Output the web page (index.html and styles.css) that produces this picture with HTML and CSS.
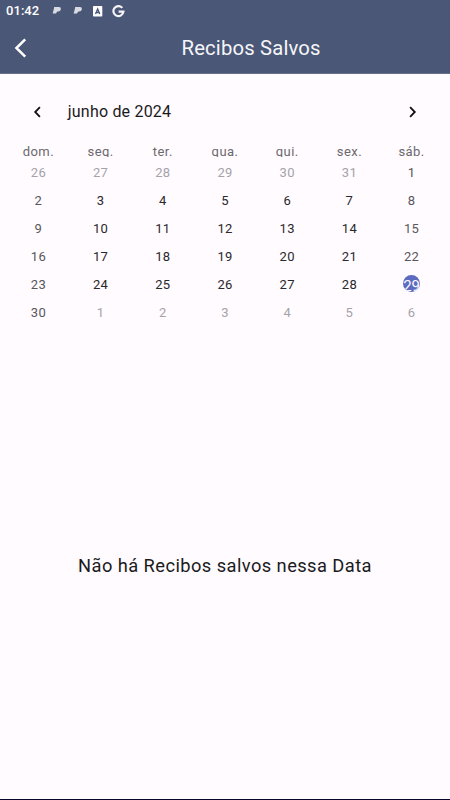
FILE: index.html
```html
<!DOCTYPE html>
<html lang="pt-BR">
<head>
<meta charset="utf-8">
<title>Recibos Salvos</title>
<link rel="stylesheet" href="styles.css">
</head>
<body>
<div class="app">
  <header class="top">
    <div class="status">
      <span class="clock">01:42</span>
      <svg class="pp" width="10" height="10" viewBox="0 0 10 10"><path d="M2.200 1h4.800q2.200 0 1.900 2.200q-.4 2.300-2.800 2.300H5.200L4 7.500H.6L1.600 4z" fill="#d9dbe3"/></svg>
      <svg class="pp" width="10" height="10" viewBox="0 0 10 10"><path d="M2.200 1h4.800q2.200 0 1.900 2.200q-.4 2.300-2.800 2.300H5.200L4 7.500H.6L1.600 4z" fill="#d9dbe3"/></svg>
      <svg class="abox" width="10" height="11" viewBox="0 0 10 11"><rect width="9.300" height="10.600" rx=".8" fill="#fff"/><path d="M2.500 8L4.650 2.900 6.800 8M3.300 6.500h2.700" stroke="#4b5777" stroke-width="1.300" fill="none"/></svg>
      <svg class="goog" width="13" height="13" viewBox="0 0 13 13"><path d="M10.300 2.900A5 5 0 1 0 11.400 6.700H6.600" stroke="#f5f5f7" stroke-width="2.200" fill="none"/></svg>
    </div>
    <div class="bar">
      <svg class="back" width="14" height="20" viewBox="0 0 14 20"><path d="M12.200 1.400L3.400 10l8.800 8.600" stroke="#fff" stroke-width="2.500" fill="none"/></svg>
      <h1>Recibos Salvos</h1>
    </div>
  </header>
  <main>
    <div class="month">
      <svg width="8" height="12" viewBox="0 0 8 12"><path d="M6.900 1.200L2.200 6l4.700 4.800" stroke="#111" stroke-width="1.800" fill="none"/></svg>
      <span class="name">junho de 2024</span>
      <svg width="8" height="12" viewBox="0 0 8 12"><path d="M1.100 1.200L5.800 6l-4.700 4.800" stroke="#111" stroke-width="1.800" fill="none"/></svg>
    </div>
    <div class="week">
      <span>dom.</span><span>seg.</span><span>ter.</span><span>qua.</span><span>qui.</span><span>sex.</span><span>sáb.</span>
    </div>
    <div class="days">
      <span class="out">26</span><span class="out">27</span><span class="out">28</span><span class="out">29</span><span class="out">30</span><span class="out">31</span><span class="end">1</span>
      <span class="end">2</span><span>3</span><span>4</span><span>5</span><span>6</span><span>7</span><span class="end">8</span>
      <span class="end">9</span><span>10</span><span>11</span><span>12</span><span>13</span><span>14</span><span class="end">15</span>
      <span class="end">16</span><span>17</span><span>18</span><span>19</span><span>20</span><span>21</span><span class="end">22</span>
      <span class="end">23</span><span>24</span><span>25</span><span>26</span><span>27</span><span>28</span><span><b class="today">29</b></span>
      <span class="end">30</span><span class="out">1</span><span class="out">2</span><span class="out">3</span><span class="out">4</span><span class="out">5</span><span class="out">6</span>
    </div>
    <p class="empty">Não há Recibos salvos nessa Data</p>
  </main>
</div>
</body>
</html>
```
FILE: styles.css
```css
* { box-sizing: border-box; }
body { margin: 0; background: #fffbff; font-family: Roboto, "Liberation Sans", sans-serif; color: #1a1a1c; }
svg { display: block; flex: none; }
.app { height: 800px; border-bottom: 1px solid #07052b; display: flex; flex-direction: column; overflow: hidden; }
.top { height: 74px; background: #4b5777; border-bottom: 1px solid #667089; color: #fff; }
.status { height: 22px; display: flex; align-items: center; padding-left: 6px; }
.clock { width: 46px; font-size: 13px; line-height: 22px; font-weight: 500; letter-spacing: .05px; }
.pp { margin-right: 10.5px; }
.abox { margin-right: 9px; }
.bar { height: 51px; display: flex; align-items: center; padding-left: 13px; }
h1 { margin: 0; flex: 1; padding-left: 154.500px; font-size: 20.300px; line-height: 24px; font-weight: 400; letter-spacing: .16px; color: #f5f6f8; }
main { flex: 1; padding: 0 7.300px; }
.month { height: 72px; padding: 4px 26px 0 26px; display: flex; align-items: center; }
.name { flex: 1; padding-left: 26.500px; margin-top: -1px; font-size: 16px; letter-spacing: .2px; }
.week, .days { display: grid; grid-template-columns: repeat(7, 1fr); text-align: center; }
.week { height: 11px; overflow: hidden; font-size: 13px; line-height: 11px; letter-spacing: .45px; color: #6b696d; }
.days { margin-top: 2px; grid-auto-rows: 28.100px; font-size: 13px; line-height: 28px; letter-spacing: .3px; color: #29282b; }
.end { color: #59575b; }
.out { color: #a5a3a8; }
.today { display: block; width: 17.500px; height: 17.500px; margin: 3.400px auto 0; border-radius: 50%; overflow: hidden; background: #5c6bc0; color: #fafaff; font-size: 15px; line-height: 23px; font-weight: 400; letter-spacing: 0; }
.empty { margin: 226.400px 0 0; text-align: center; font-size: 18.300px; line-height: 24px; letter-spacing: .43px; }
```
